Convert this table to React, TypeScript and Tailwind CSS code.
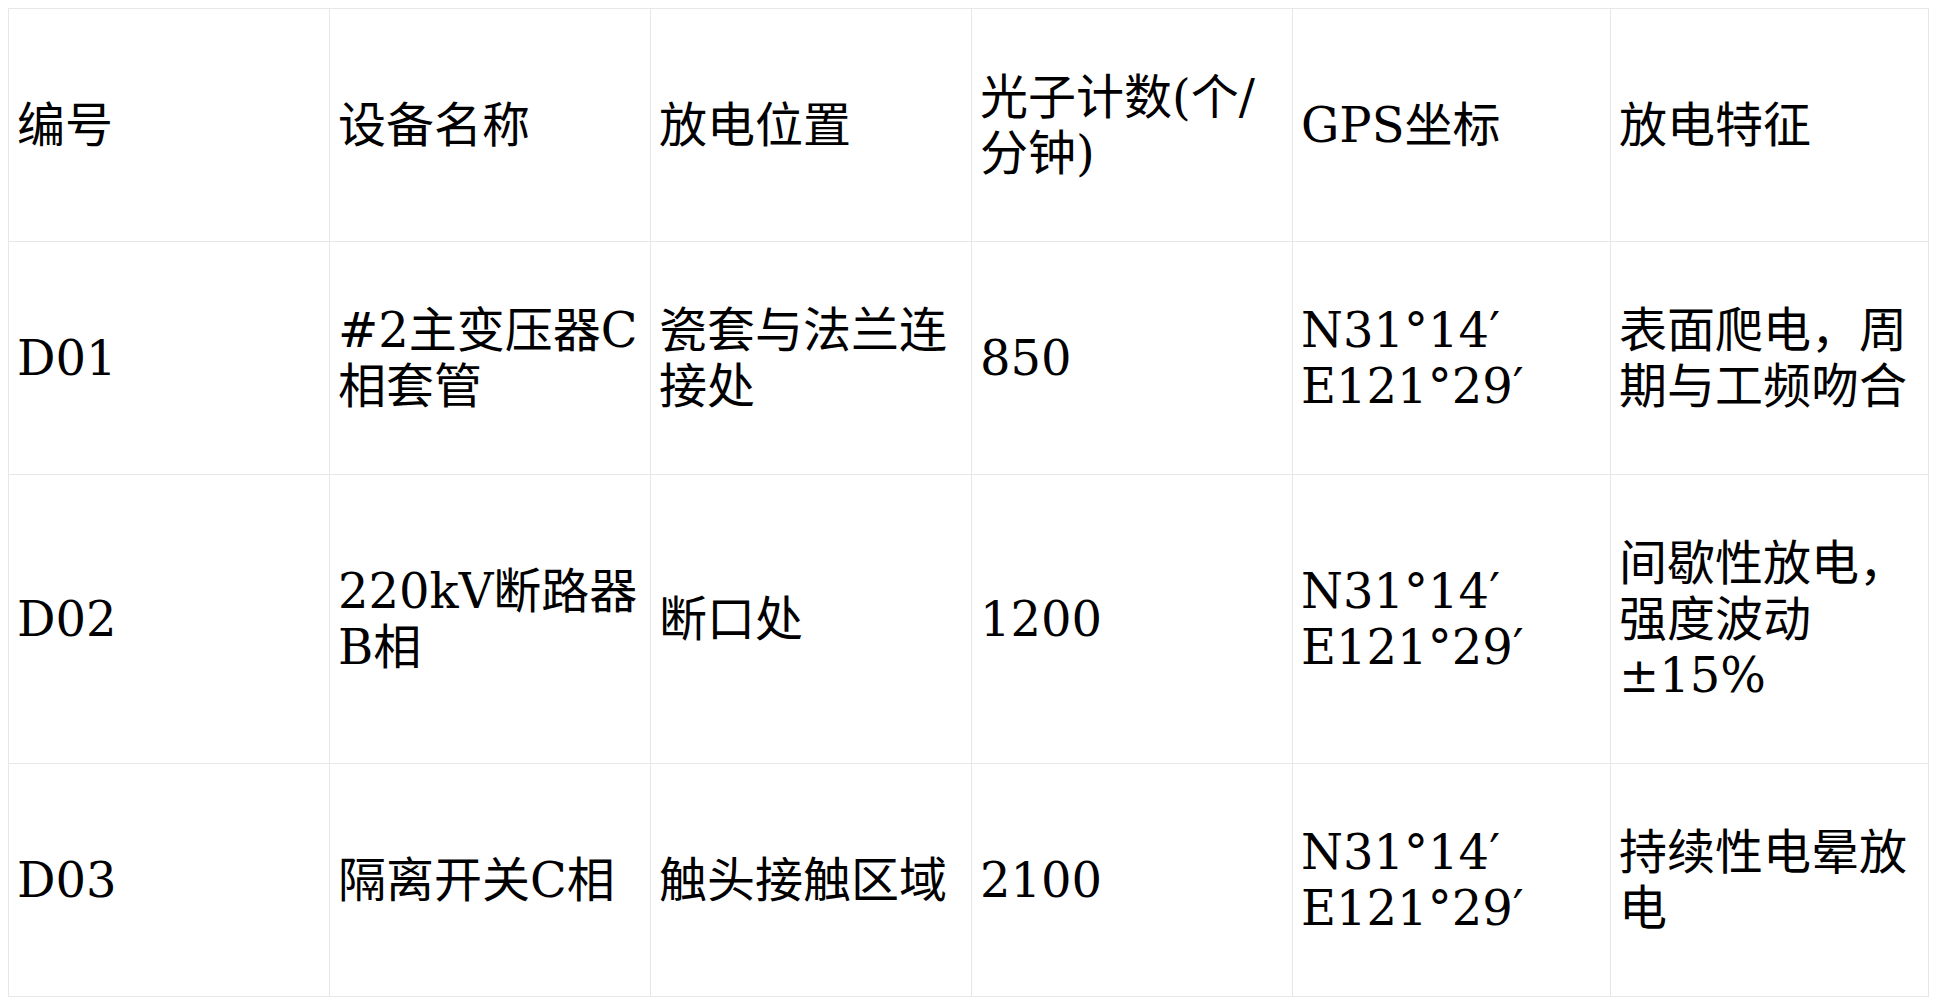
import React from "react";

const headers = ["编号", "设备名称", "放电位置", "光子计数(个/分钟)", "GPS坐标", "放电特征"];

const rows = [
  ["D01", "#2主变压器C相套管", "瓷套与法兰连接处", "850", "N31°14′ E121°29′", "表面爬电，周期与工频吻合"],
  ["D02", "220kV断路器B相", "断口处", "1200", "N31°14′ E121°29′", "间歇性放电，强度波动±15%"],
  ["D03", "隔离开关C相", "触头接触区域", "2100", "N31°14′ E121°29′", "持续性电晕放电"],
];

const colWidths = ["w-[321px]", "w-[321px]", "w-[321px]", "w-[321px]", "w-[318px]", "w-[318px]"];

export default function App() {
  return (
    <div className="min-h-screen bg-white p-2 text-black [font-family:'DejaVu_Serif','Noto_Sans_CJK_SC',serif]">
      <table className="w-[1921px] table-fixed border-collapse text-[48px] leading-[56px]">
        <colgroup>
          {colWidths.map((w, i) => (
            <col key={i} className={w} />
          ))}
        </colgroup>
        <thead>
          <tr>
            {headers.map((h) => (
              <th key={h} className="border border-gray-200 px-2 py-[60px] text-left align-middle font-normal">
                {h}
              </th>
            ))}
          </tr>
        </thead>
        <tbody>
          {rows.map((r) => (
            <tr key={r[0]}>
              {r.map((c, i) => (
                <td key={i} className="border border-gray-200 px-2 py-[60px] align-middle">
                  {c}
                </td>
              ))}
            </tr>
          ))}
        </tbody>
      </table>
    </div>
  );
}
